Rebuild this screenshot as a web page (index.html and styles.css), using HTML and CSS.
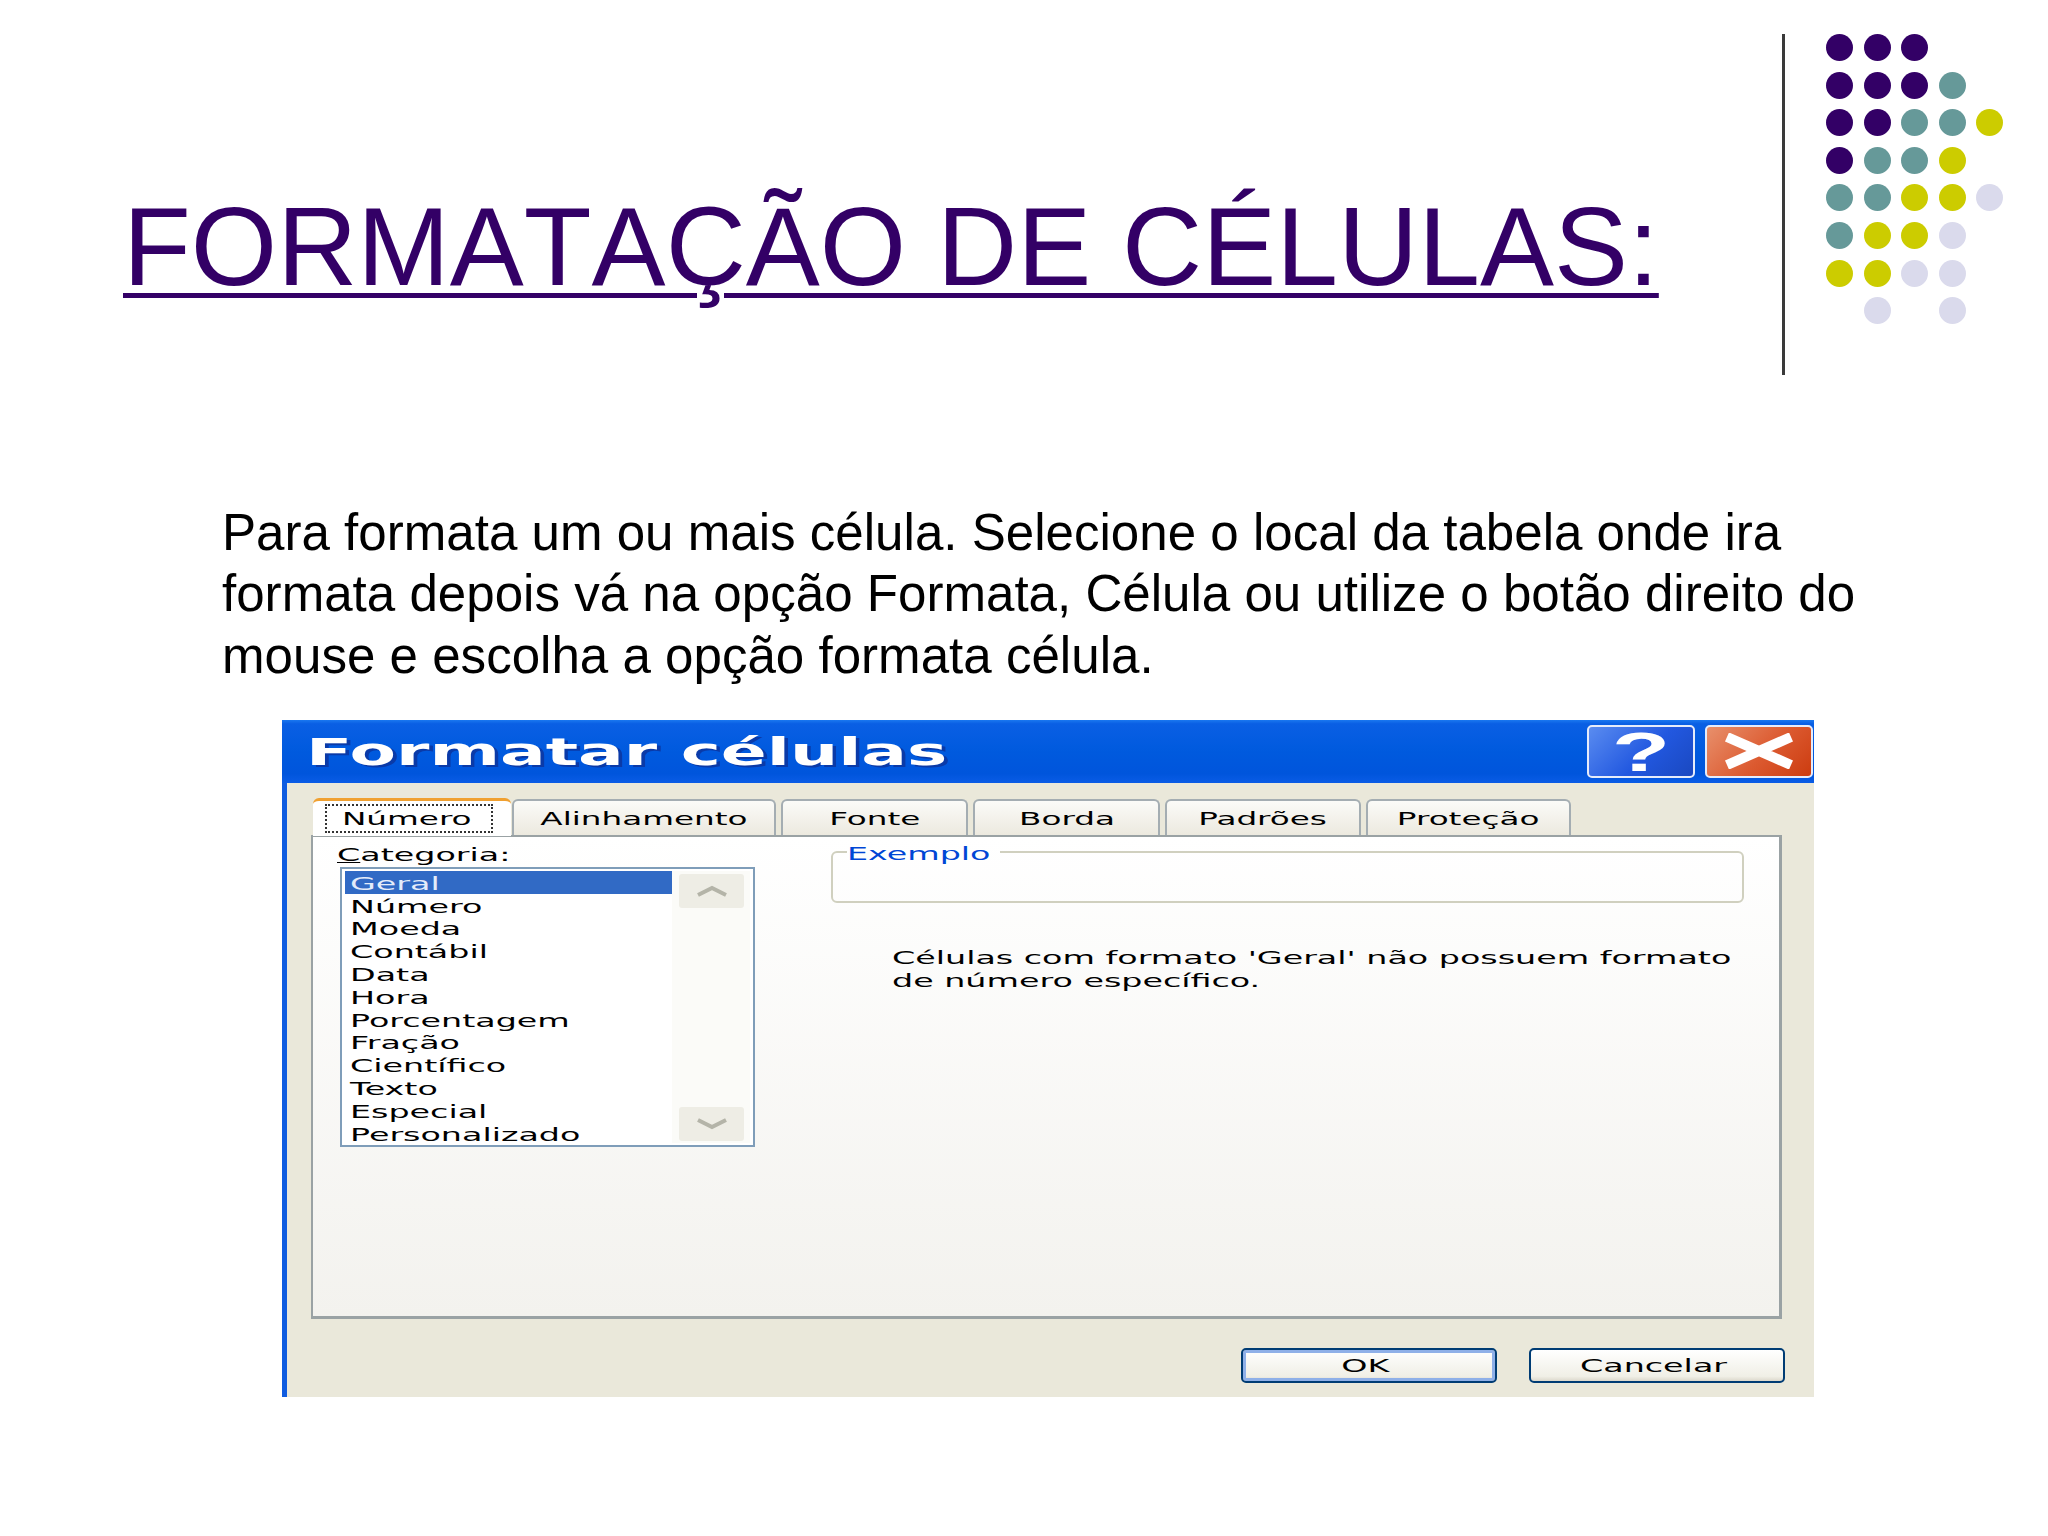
FILE: index.html
```html
<!DOCTYPE html>
<html lang="pt">
<head>
    <meta charset="UTF-8">
    <title>Formatação de células</title>
    <link rel="stylesheet" href="styles.css">
</head>
<body>
<div class="slide">
    <div class="head">
        <h1 class="title">FORMATAÇÃO DE CÉLULAS:</h1>
        <div class="rule"></div>
        <div class="dots">
            <i class="p"></i><i class="p"></i><i class="p"></i><i></i><i></i>
            <i class="p"></i><i class="p"></i><i class="p"></i><i class="t"></i><i></i>
            <i class="p"></i><i class="p"></i><i class="t"></i><i class="t"></i><i class="y"></i>
            <i class="p"></i><i class="t"></i><i class="t"></i><i class="y"></i><i></i>
            <i class="t"></i><i class="t"></i><i class="y"></i><i class="y"></i><i class="l"></i>
            <i class="t"></i><i class="y"></i><i class="y"></i><i class="l"></i><i></i>
            <i class="y"></i><i class="y"></i><i class="l"></i><i class="l"></i><i></i>
            <i></i><i class="l"></i><i></i><i class="l"></i><i></i>
        </div>
    </div>

    <p class="intro">Para formata um ou mais célula. Selecione o local da tabela onde ira<br>formata depois vá na opção Formata, Célula ou utilize o botão direito do<br>mouse e escolha a opção formata célula.</p>

    <div class="dialog">
        <div class="titlebar">
            <span class="cap">Formatar células</span>
            <div class="win-btn help"><span class="mark">?</span></div>
            <div class="win-btn close">
                <svg width="80" height="36" viewBox="0 0 80 36"><path d="M8 4 L72 32 M72 4 L8 32" stroke="#fff" stroke-width="10" fill="none"/></svg>
            </div>
        </div>
        <div class="dlg-body">
            <ul class="tabs">
                <li class="tab t1 on"><span class="focus"><span class="w">Número</span></span></li>
                <li class="tab t2"><span class="w">Alinhamento</span></li>
                <li class="tab t3"><span class="w">Fonte</span></li>
                <li class="tab t4"><span class="w">Borda</span></li>
                <li class="tab t5"><span class="w">Padrões</span></li>
                <li class="tab t6"><span class="w">Proteção</span></li>
            </ul>
            <div class="panel">
                <div class="cat">
                    <div class="cat-label"><span class="w"><u>C</u>ategoria:</span></div>
                    <div class="list">
                        <ul class="items">
                            <li class="sel"><span class="w">Geral</span></li>
                            <li><span class="w">Número</span></li>
                            <li><span class="w">Moeda</span></li>
                            <li><span class="w">Contábil</span></li>
                            <li><span class="w">Data</span></li>
                            <li><span class="w">Hora</span></li>
                            <li><span class="w">Porcentagem</span></li>
                            <li><span class="w">Fração</span></li>
                            <li><span class="w">Científico</span></li>
                            <li><span class="w">Texto</span></li>
                            <li><span class="w">Especial</span></li>
                            <li><span class="w">Personalizado</span></li>
                        </ul>
                        <div class="scroll">
                            <div class="arrow">
                                <svg width="34" height="12" viewBox="0 0 34 12"><path d="M3 10 L17 3 L31 10" stroke="#b4b4a8" stroke-width="4" fill="none"/></svg>
                            </div>
                            <div class="arrow">
                                <svg width="34" height="12" viewBox="0 0 34 12"><path d="M3 2 L17 9 L31 2" stroke="#b4b4a8" stroke-width="4" fill="none"/></svg>
                            </div>
                        </div>
                    </div>
                </div>
                <div class="detail">
                    <fieldset class="sample">
                        <legend><span class="w">Exemplo</span></legend>
                    </fieldset>
                    <p class="desc"><span class="w">Células com formato 'Geral' não possuem formato<br>de número específico.</span></p>
                </div>
            </div>
            <div class="actions">
                <div class="btn ok"><span class="w">OK</span></div>
                <div class="btn"><span class="w">Cancelar</span></div>
            </div>
        </div>
    </div>
</div>
</body>
</html>
```

FILE: styles.css
```css
html,body{
    margin:0;
    background:#fff;
}
ul{
    margin:0;
    padding:0;
    list-style:none;
}
.slide{
    width:2048px;
    height:1536px;
    overflow:hidden;
    font-family:"Liberation Sans",Arial,sans-serif;
}

/* cabecalho */
.head{
    display:flex;
    height:341px;
    padding:34px 0 0 123px;
}
.title{
    width:1659px;
    height:128px;
    margin:149px 0 0;
    font-size:111px;
    font-weight:normal;
    font-kerning:none;
    line-height:128px;
    color:#330066;
    white-space:nowrap;
    text-decoration:underline;
    text-decoration-thickness:5px;
    text-underline-offset:8px;
}
.rule{
    width:3px;
    height:341px;
    background:#3a3a3a;
}
.dots{
    display:grid;
    grid-template-columns:repeat(5,27px);
    grid-auto-rows:27px;
    gap:10.6px;
    margin-left:41px;
}
.dots i{
    display:block;
    border-radius:50%;
}
.dots .p{background:#330066;}
.dots .t{background:#669999;}
.dots .y{background:#cccc00;}
.dots .l{background:#dadaec;}

.intro{
    margin:0;
    padding:127px 0 0 222px;
    font-size:51.1px;
    line-height:61.3px;
    color:#000;
    white-space:nowrap;
}

/* janela */
.dialog{
    display:flex;
    flex-direction:column;
    width:1532px;
    height:677px;
    margin:34px 0 0 282px;
    background:#eae8da;
    font-family:"DejaVu Sans",sans-serif;
    font-size:17px;
    color:#000;
}
.w{
    display:inline-block;
    transform:scaleX(1.96);
    transform-origin:left center;
    white-space:nowrap;
}
.titlebar{
    display:flex;
    align-items:center;
    height:63px;
    padding-left:24px;
    box-sizing:border-box;
    background:linear-gradient(#1a78f0 0,#0a5fe4 6%,#005ade 50%,#0055dc 85%,#0a5ce6 100%);
}
.cap{
    flex:1;
    padding-top:3px;
    font-size:37px;
    font-weight:bold;
    color:#fff;
    white-space:nowrap;
    transform:scaleX(1.83);
    transform-origin:left center;
    text-shadow:2px 2px 0 #0a3aa8;
}
.win-btn{
    display:flex;
    align-items:center;
    justify-content:center;
    width:108px;
    height:53px;
    box-sizing:border-box;
    border:2px solid #e6ecfa;
    border-radius:5px;
}
.help{
    margin-right:10px;
    background:linear-gradient(135deg,#5a8cf0,#2258e0 55%,#1a48c0);
    font-family:"Liberation Sans",sans-serif;
    font-size:56px;
    font-weight:bold;
    color:#fff;
}
.mark{
    transform:scaleX(1.7);
}
.close{
    margin-right:1px;
    background:linear-gradient(135deg,#e8906c,#dc5a30 55%,#cc3c10);
}
.dlg-body{
    flex:1;
    border-left:5px solid #0f5ce0;
    padding:15px 0 0 24px;
}
.tabs{
    display:flex;
    align-items:flex-end;
    gap:5px;
    height:37px;
    padding-left:2px;
}
.tab{
    display:flex;
    align-items:center;
    justify-content:center;
    height:36px;
    padding-top:3px;
    box-sizing:border-box;
    border:2px solid #a4adb2;
    border-bottom:0;
    border-radius:6px 6px 0 0;
    background:linear-gradient(#fbfbf8,#ece9df);
}
.tab .w{
    transform-origin:center;
    transform:scaleX(1.92);
}
.t1{width:198px;}
.t2{width:264px;}
.t3{width:187px;}
.t4{width:187px;}
.t5{width:196px;}
.t6{width:205px;}
.tab.on{
    height:38px;
    margin-right:-4px;
    margin-bottom:-1px;
    padding:0 0 0 12px;
    position:relative;
    border:0;
    border-top:3px solid #f0a030;
    background:#fff;
    justify-content:flex-start;
}
.focus{
    display:flex;
    align-items:center;
    justify-content:center;
    width:168px;
    height:29px;
    padding:2px 4px 0 0;
    box-sizing:border-box;
    border:2px dotted #333;
}
.panel{
    display:flex;
    width:1471px;
    height:484px;
    box-sizing:border-box;
    border:2px solid #9aa2a4;
    border-right-width:3px;
    border-bottom-width:3px;
    background:linear-gradient(#fff,#f3f2ee);
}
.cat{
    margin-left:24px;
}
.cat-label{
    height:30px;
    padding-top:2px;
    box-sizing:border-box;
    line-height:32px;
}
.list{
    display:flex;
    width:415px;
    height:280px;
    margin-left:3px;
    box-sizing:border-box;
    border:2px solid #7f9db9;
    padding:2px 3px;
    background:#fff;
}
.items{
    width:327px;
}
.items li{
    height:22.8px;
    line-height:27px;
    padding-left:5px;
}
.items .sel{
    background:#316ac5;
    color:#e4ecfa;
}
.scroll{
    display:flex;
    flex-direction:column;
    justify-content:space-between;
    flex:1;
    padding:3px 6px 2px 7px;
    background:#fbfbf8;
}
.arrow{
    display:flex;
    align-items:center;
    justify-content:center;
    height:34px;
    border-radius:3px;
    background:#eeede5;
}
.detail{
    width:920px;
    margin-left:76px;
}
.sample{
    width:913px;
    height:61px;
    box-sizing:border-box;
    margin:5px 0 0;
    padding:0;
    border:2px solid #d0d0bf;
    border-radius:6px;
}
.sample legend{
    width:153px;
    height:20px;
    margin-left:14px;
    padding:0;
    line-height:24px;
    color:#0046d5;
}
.desc{
    margin:44px 0 0 61px;
    line-height:23.5px;
}
.desc .w{
    transform-origin:left top;
}
.actions{
    display:flex;
    justify-content:flex-end;
    gap:32px;
    padding:29px 29px 0 0;
}
.btn{
    display:flex;
    align-items:center;
    justify-content:center;
    width:256px;
    height:35px;
    box-sizing:border-box;
    padding:2px 8px 0 0;
    border:2px solid #003c74;
    border-radius:5px;
    background:linear-gradient(#fff,#f0efe6 85%,#dcd8cc);
}
.btn .w{
    transform-origin:center;
}
.ok{
    box-shadow:inset 0 0 0 3px #8fb0e8;
}
```
